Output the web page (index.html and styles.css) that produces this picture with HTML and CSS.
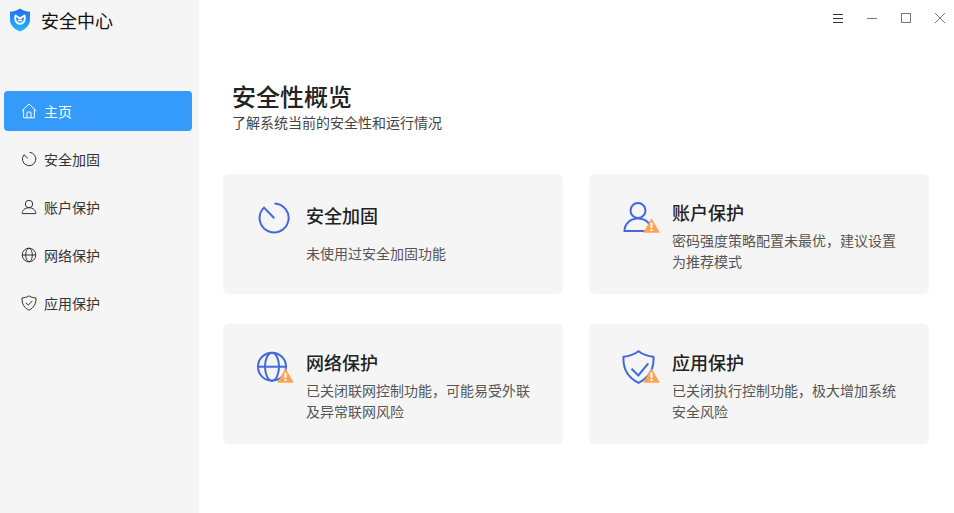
FILE: index.html
```html
<!DOCTYPE html>
<html lang="zh-CN">
<head>
  <meta charset="UTF-8" />
  <title>安全中心</title>
  <link rel="stylesheet" href="styles.css">
</head>
<body>
  <svg class="defs" width="0" height="0">
    <defs>
      <symbol id="warn" viewBox="0 0 17 15">
        <path d="M8.500 0.300 L16.800 14.700 H0.200 Z" fill="#ffa352"/>
        <rect x="7.500" y="4.600" width="2" height="5.400" fill="#fff"/>
        <rect x="7.500" y="11" width="2" height="2" fill="#fff"/>
      </symbol>
    </defs>
  </svg>
  <div class="app">
    <aside class="sidebar">
      <div class="brand">
        <svg class="logo" viewBox="0 0 22 24">
          <defs>
            <linearGradient id="lg" x1="0" y1="0" x2="0" y2="1">
              <stop offset="0" stop-color="#1d6ff0"/>
              <stop offset="1" stop-color="#27b6fb"/>
            </linearGradient>
          </defs>
          <path d="M11 0.500 C13.500 2.600 17 3.600 21 3.800 V11.500 C21 17.200 16.800 21.400 11 23.500 C5.200 21.400 1 17.200 1 11.500 V3.800 C5 3.600 8.500 2.600 11 0.500 Z" fill="url(#lg)"/>
          <path d="M6.500 7.500 L11 10.500 L15.500 7.500 C16.700 11 15.300 15.300 11 15.800 C6.700 15.300 5.300 11 6.500 7.500 Z" fill="none" stroke="#fff" stroke-width="1.800" stroke-linejoin="round"/>
          <path d="M9 12.500 H13" stroke="#fff" stroke-width="1.500"/>
        </svg>
        <span class="brand-name">安全中心</span>
      </div>
      <nav class="nav">
        <a class="nav-item active">
          <svg class="nav-icon" viewBox="0 0 16 16"><path d="M0.800 7.800 L8 1 L15.200 7.800 M2.600 6.500 V14.800 H13.400 V6.500 M6 14.800 V10 Q6 9 7 9 H9 Q10 9 10 10 V14.800"/></svg>
          <span>主页</span>
        </a>
        <a class="nav-item">
          <svg class="nav-icon" viewBox="0 0 16 16"><path d="M8.500 1.300 A6.700 6.700 0 1 1 3 3.700 L6.800 7.300"/></svg>
          <span>安全加固</span>
        </a>
        <a class="nav-item">
          <svg class="nav-icon" viewBox="0 0 16 16"><circle cx="8" cy="5" r="3.700"/><path d="M1.200 14.600 C1.200 11 4 8.800 8 8.800 C12 8.800 14.800 11 14.800 14.600 Z"/></svg>
          <span>账户保护</span>
        </a>
        <a class="nav-item">
          <svg class="nav-icon" viewBox="0 0 16 16"><circle cx="8" cy="8" r="6.800"/><ellipse cx="8" cy="8" rx="3.300" ry="6.800"/><path d="M1.200 8 H14.800"/></svg>
          <span>网络保护</span>
        </a>
        <a class="nav-item">
          <svg class="nav-icon" viewBox="0 0 16 16"><path d="M8 0.900 C9.800 2 12 2.700 15 3 C15.200 8.800 12.700 12.900 8 15.200 C3.300 12.900 0.800 8.800 1 3 C4 2.700 6.200 2 8 0.900 Z"/><path d="M4.900 7.800 L7.300 10.100 L11.300 5.900"/></svg>
          <span>应用保护</span>
        </a>
      </nav>
    </aside>

    <main class="main">
      <div class="titlebar">
        <svg class="win-icon" viewBox="0 0 12 12"><path d="M1 2.500 H11 M1 6.500 H11 M1 10.500 H11" stroke="#333"/></svg>
        <svg class="win-icon" viewBox="0 0 12 12"><path d="M1 6.500 H11" stroke="#777"/></svg>
        <svg class="win-icon" viewBox="0 0 12 12"><rect x="1.500" y="1.500" width="9" height="9" fill="none" stroke="#777"/></svg>
        <svg class="win-icon" viewBox="0 0 12 12"><path d="M1 1 L11 11 M11 1 L1 11" stroke="#777"/></svg>
      </div>
      <header class="heading">
        <h1>安全性概览</h1>
        <p>了解系统当前的安全性和运行情况</p>
      </header>
      <section class="cards">
        <div class="card">
          <div class="card-icon">
            <svg class="big-icon" viewBox="0 0 34 34"><path d="M18.500 3.500 A14.500 14.500 0 1 1 8 7.600 L18.300 18.300"/></svg>
          </div>
          <div class="card-body plain">
            <h3>安全加固</h3>
            <p>未使用过安全加固功能</p>
          </div>
        </div>
        <div class="card">
          <div class="card-icon">
            <svg class="big-icon" viewBox="0 0 34 34"><circle cx="16" cy="10.500" r="7.500"/><path d="M2.500 31 C2.500 23.500 8.500 18.500 16 18.500 C23.500 18.500 29.500 23.500 29.500 31 Z"/></svg>
            <svg class="warn-icon"><use href="#warn"/></svg>
          </div>
          <div class="card-body">
            <h3>账户保护</h3>
            <p>密码强度策略配置未最优，建议设置为推荐模式</p>
          </div>
        </div>
        <div class="card">
          <div class="card-icon">
            <svg class="big-icon" viewBox="0 0 34 34"><circle cx="16" cy="16.700" r="14"/><ellipse cx="16" cy="16.700" rx="7" ry="14"/><path d="M2 16.700 H30"/></svg>
            <svg class="warn-icon"><use href="#warn"/></svg>
          </div>
          <div class="card-body">
            <h3>网络保护</h3>
            <p>已关闭联网控制功能，可能易受外联及异常联网风险</p>
          </div>
        </div>
        <div class="card">
          <div class="card-icon">
            <svg class="big-icon" viewBox="0 0 34 34"><path d="M16.500 1.200 C20 3.800 25 6 31.500 6.800 C32.200 19 26 28 16.500 32.800 C7 28 0.800 19 1.500 6.800 C8 6 13 3.800 16.500 1.200 Z"/><path d="M9.500 18.800 L16.300 25.500 L26.300 13.300"/></svg>
            <svg class="warn-icon"><use href="#warn"/></svg>
          </div>
          <div class="card-body">
            <h3>应用保护</h3>
            <p>已关闭执行控制功能，极大增加系统安全风险</p>
          </div>
        </div>
      </section>
    </main>
  </div>
</body>
</html>
```

FILE: styles.css
```css
html, body {
  margin: 0;
  padding: 0;
  height: 100%;
  overflow: hidden;
  background: #fff;
  font-family: "Noto Sans CJK SC", "Noto Sans", sans-serif;
}
.defs {
  display: block;
  height: 0;
}
.app {
  display: flex;
  height: 513px;
}
.sidebar {
  width: 199px;
  flex: none;
  background: #f5f5f5;
  box-sizing: border-box;
  padding: 0 7px 0 4px;
}
.brand {
  display: flex;
  align-items: center;
  height: 40px;
  padding-left: 5px;
}
.logo {
  width: 22px;
  height: 24px;
  margin-right: 10px;
}
.brand-name {
  font-size: 18px;
  color: #111;
}
.nav {
  margin-top: 51px;
  display: flex;
  flex-direction: column;
  gap: 8px;
}
.nav-item {
  display: flex;
  align-items: center;
  height: 40px;
  padding-left: 17px;
  border-radius: 4px;
  font-size: 14px;
  color: #333;
}
.nav-item.active {
  background: #349bfa;
  color: #fff;
}
.nav-icon {
  width: 16px;
  height: 16px;
  margin-right: 7px;
  fill: none;
  stroke: #333;
  stroke-width: 1;
}
.active .nav-icon {
  stroke: #fff;
}
.main {
  flex: 1;
  box-sizing: border-box;
}
.titlebar {
  display: flex;
  justify-content: flex-end;
  gap: 22px;
  height: 36px;
  padding: 12px 8px 0 0;
  box-sizing: border-box;
}
.win-icon {
  width: 12px;
  height: 12px;
}
.heading {
  margin: 43px 0 0 33px;
}
.heading h1 {
  margin: 0;
  font-size: 24px;
  font-weight: 500;
  line-height: 33px;
  color: #222;
}
.heading p {
  margin: 0;
  font-size: 14px;
  line-height: 20px;
  color: #444;
}
.cards {
  display: grid;
  grid-template-columns: 340px 340px;
  grid-auto-rows: 120px;
  gap: 30px 26px;
  margin: 42px 0 0 24px;
}
.card {
  display: flex;
  background: #f5f5f5;
  border-radius: 6px;
  padding-left: 33px;
}
.card-icon {
  position: relative;
  width: 50px;
  flex: none;
  padding-top: 26px;
}
.big-icon {
  display: block;
  width: 34px;
  height: 34px;
  fill: none;
  stroke: #4169dc;
  stroke-width: 2;
}
.warn-icon {
  position: absolute;
  left: 21px;
  top: 44px;
  width: 17px;
  height: 15px;
}
.card-body {
  width: 232px;
  padding-top: 25px;
}
.card-body.plain {
  padding-top: 28px;
}
.card-body h3 {
  margin: 0;
  font-size: 18px;
  font-weight: 500;
  line-height: 26px;
  color: #222;
}
.card-body p {
  margin: 5px 0 0;
  font-size: 14px;
  line-height: 21px;
  color: #555;
}
.card-body.plain p {
  margin-top: 15px;
}
```
